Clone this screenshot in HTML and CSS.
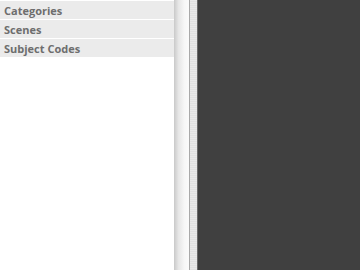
FILE: index.html
```html
<!DOCTYPE html>
<html>
<head>
<meta charset="utf-8">
<link rel="stylesheet" href="styles.css">
</head>
<body>
<div class="app">
  <div class="sidebar">
    <div class="row">Categories</div>
    <div class="row">Scenes</div>
    <div class="row">Subject Codes</div>
  </div>
  <div class="shadow"></div>
  <div class="edge"></div>
  <div class="gutter"></div>
  <div class="edge-dark"></div>
  <div class="canvas"></div>
</div>
</body>
</html>
```
FILE: styles.css
```css
html, body {
  margin: 0;
  padding: 0;
  width: 360px;
  height: 270px;
  overflow: hidden;
}
.app {
  display: flex;
  height: 270px;
}
.sidebar {
  width: 174px;
  background: #ffffff;
  padding-top: 1px;
  display: flex;
  flex-direction: column;
  gap: 1px;
}
.row {
  height: 18px;
  line-height: 20px;
  background: #ebebeb;
  color: #6e6e6e;
  font-family: "Open Sans", sans-serif;
  font-weight: bold;
  font-size: 11px;
  padding-left: 4px;
}
.shadow {
  width: 15px;
  background: linear-gradient(to right, #c9c9c9, #e6e6e6 30%, #f7f7f7 70%, #fbfbfb);
}
.edge {
  width: 1px;
  background: #a9a9a9;
}
.gutter {
  width: 7px;
  background: repeating-linear-gradient(to bottom, #eaeaea 0, #eaeaea 1px, #e2e2e2 1px, #e2e2e2 2px);
}
.edge-dark {
  width: 1px;
  background: #6a6a6a;
}
.canvas {
  flex: 1;
  background: #404040;
}
```
